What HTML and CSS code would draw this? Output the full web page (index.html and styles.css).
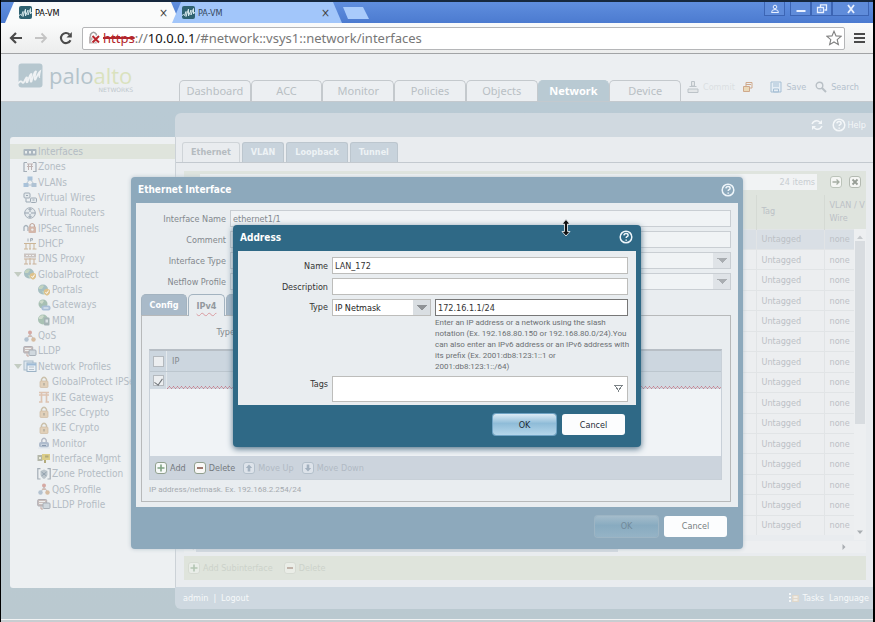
FILE: index.html
```html
<!DOCTYPE html>
<html lang="en">
<head>
<meta charset="utf-8">
<title>PA-VM</title>
<link rel="stylesheet" href="styles.css">
</head>
<body>
<svg class="defs" aria-hidden="true">
  <defs>
    <symbol id="logo" viewBox="0 0 13 13"><rect width="13" height="13" rx="2" fill="#2f6271"/><path d="M0 9.500q2-2 2.500 0L4 5.500v5L6.500 3v7L9 4v5l2.500-6.500V8l1.500-2" fill="none" stroke="#d5e6ea" stroke-width="1"/></symbol>
    <symbol id="help" viewBox="0 0 14 14"><circle cx="7" cy="7" r="5.800" fill="none" stroke="currentColor" stroke-width="1.500"/><path d="M4.900 5.400q.2-1.900 2.200-1.900 2 0 2 1.700 0 1-1 1.500-.9.500-.9 1.400M7.200 9.400v1.400" fill="none" stroke="currentColor" stroke-width="1.500"/></symbol>
    <symbol id="plus" viewBox="0 0 12 12"><rect x=".5" y=".5" width="11" height="11" rx="2.500" fill="#f6f9f8" stroke="currentColor"/><path d="M6 2.500v7M2.500 6h7" stroke="#7fa283" stroke-width="1.600"/></symbol>
    <symbol id="minus" viewBox="0 0 12 12"><rect x=".5" y=".5" width="11" height="11" rx="2.500" fill="#f9f8f6" stroke="currentColor"/><path d="M3 6h6" stroke="#93695f" stroke-width="1.800"/></symbol>
    <symbol id="up" viewBox="0 0 12 12"><rect x=".5" y=".5" width="11" height="11" rx="2.500" fill="#dde3ea" stroke="currentColor"/><path d="M6 2.500 9.200 6H7.300v3.500H4.700V6H2.800z" fill="#a3b1bf"/></symbol>
    <symbol id="down" viewBox="0 0 12 12"><rect x=".5" y=".5" width="11" height="11" rx="2.500" fill="#dde3ea" stroke="currentColor"/><path d="M6 9.500 9.200 6H7.300V2.500H4.700V6H2.800z" fill="#a3b1bf"/></symbol>
    <symbol id="i-if" viewBox="0 0 14 12"><rect x=".5" y="3" width="13" height="6.500" rx="1" fill="#a2afba"/><path d="M2 5h2v2.500H2zM6 5h2v2.500H6zM10 5h2v2.500h-2z" fill="#edf0f0"/></symbol>
    <symbol id="i-zone" viewBox="0 0 14 12"><path d="M1 1.500h3M1 1.500v9h3M13 1.500h-3M13 1.500v9h-3" fill="none" stroke="#98a3ad" stroke-width="1.200"/><path d="M4 3h6M4 5.500h6M5.500 3v6M8.500 3v6" stroke="#b8a9a9"/></symbol>
    <symbol id="i-vlan" viewBox="0 0 14 12"><path d="M7 3 3 8M7 3l4 5M3 9h8" stroke="#aebdc8" fill="none"/><rect x="4.500" y=".5" width="5" height="4" fill="#9ebbd5"/><rect x=".5" y="7" width="5" height="4" fill="#9ebbd5"/><rect x="8.500" y="7" width="5" height="4" fill="#a6bccf"/></symbol>
    <symbol id="i-wire" viewBox="0 0 14 12"><rect x="1" y="1" width="6" height="5" rx="1" fill="#e3e8ec" stroke="#929fab"/><rect x="7.500" y="6" width="6" height="4.500" rx="1" fill="#e3e8ec" stroke="#929fab"/><path d="M3 6.500v3.500h4M3 3.500h2M9.500 8h2" fill="none" stroke="#8f9daa"/></symbol>
    <symbol id="i-router" viewBox="0 0 14 12"><circle cx="7" cy="6" r="5.300" fill="#e3e8ec" stroke="#9aa5b0"/><path d="M7 1.500v3.500M5.500 3 7 1.500 8.500 3M7 10.500V7M5.500 9 7 10.500 8.500 9M1.500 6H6M12.500 6H8" fill="none" stroke="#8795a3"/></symbol>
    <symbol id="i-tunnel" viewBox="0 0 14 12"><path d="M1 9V5q2-3 4 0v4" fill="none" stroke="#9aa7b1" stroke-width="1.300"/><rect x="5.500" y="4.500" width="7.500" height="6.500" rx="1" fill="#d0ae9e"/><path d="M7 5V3q2.200-3 4.400 0v2" fill="none" stroke="#bb9b8e" stroke-width="1.200"/><circle cx="9.300" cy="7.600" r="1.200" fill="#edf0f0"/></symbol>
    <symbol id="i-dhcp" viewBox="0 0 14 12"><path d="M5 .5v3M7.500 3.500v-3h2v1.600h-2" fill="none" stroke="#9aa5b0"/><path d="M7 5v6M1 5.500h12M3 5.500V11M11 5.500V11M1 11h4M6 11h2M9.500 11h4" fill="none" stroke="#c6ab86"/></symbol>
    <symbol id="i-dns" viewBox="0 0 14 12"><rect x="1" y=".5" width="12" height="4" fill="#c6bdb9"/><path d="M7 5v6M1 6h12M3 6v5M11 6v5M1 11h4M6 11h2M9.500 11h4" fill="none" stroke="#c4a78b"/><path d="M3 2.500h2M6 2.500h2M9 2.500h2" stroke="#eee"/></symbol>
    <symbol id="i-globe" viewBox="0 0 14 12"><circle cx="6" cy="5.500" r="5" fill="#9ab7ba"/><path d="M2 3q3-3 5-1L5 5 2 5zM5 7l4 1-2 3z" fill="#bdd0b8"/><path d="M7 6 10 4.500 13 6v3q-1 2-3 2.800Q8 11 7 9z" fill="#dcba7b"/><path d="m8.500 8 1.200 1.500 2-3" fill="none" stroke="#fff"/></symbol>
    <symbol id="i-gate" viewBox="0 0 14 12"><circle cx="6" cy="5" r="4.500" fill="#9ab7a9"/><path d="M2 3q3-3 5-1L5 5z" fill="#c8d7c5"/><rect x="4.500" y="6.500" width="9" height="5" rx="2" fill="#9fb7d3"/><path d="M6.500 9h5" stroke="#edf3f9"/></symbol>
    <symbol id="i-mdm" viewBox="0 0 14 12"><circle cx="6" cy="5.500" r="5" fill="#9ebbaa"/><path d="M2 3q3-3 5-1L5 5 2 5z" fill="#c8d7c5"/><rect x="7" y="3.500" width="5.500" height="8" rx="1" fill="#98a9ab"/><path d="M8.500 5.500h2.500v3H8.500z" fill="#d8e0e2"/></symbol>
    <symbol id="i-qos" viewBox="0 0 14 12"><path d="m7 4-3 5M7 4l3.500 5" stroke="#b5bcc1"/><circle cx="7" cy="2.500" r="2" fill="#d29d96"/><path d="M4.500 7q2.500-4 5 0z" fill="#ccb2a9"/><circle cx="3.500" cy="9.500" r="2.200" fill="#a9bacb"/><circle cx="10.500" cy="9.500" r="2.200" fill="#d3b394"/></symbol>
    <symbol id="i-lldp" viewBox="0 0 14 12"><rect x=".7" y="1.500" width="9" height="6.500" rx="1" fill="#c5b7b4" stroke="#a5a3aa"/><path d="M2 3.500h6M2 5.500h6" stroke="#eee"/><rect x="6" y="5" width="7" height="5.500" rx="1" fill="#ccd4db" stroke="#9ba4ad"/><path d="M4 8.500v2.500h2" fill="none" stroke="#be9b91"/></symbol>
    <symbol id="i-prof" viewBox="0 0 14 12"><rect x="1" y="1" width="9" height="9" fill="#dbe6ef" stroke="#9fb3c4"/><rect x="4" y="3" width="9" height="8.500" fill="#e9f1f7" stroke="#8fa9bf"/><path d="M4 4.500h9" stroke="#8fb0d0" stroke-width="2"/><path d="M6 7h5M6 9.500h5" stroke="#aebbc6"/></symbol>
    <symbol id="i-lock" viewBox="0 0 14 12"><path d="M4.500 5.500V3.300q2.500-4 5 0v2.200" fill="none" stroke="#c6b99f" stroke-width="1.400"/><rect x="3" y="5" width="8" height="6.500" rx="1" fill="#e0cbb0" stroke="#c8b294" stroke-width=".7"/><path d="M7 7v2.500" stroke="#a39c8c" stroke-width="1.300"/></symbol>
    <symbol id="i-ike" viewBox="0 0 14 12"><path d="M2 1.500h10M2 4h10M4.500 1.500V11M9.500 1.500V11M2 11h3.500M8.500 11H12" fill="none" stroke="#dbbca6" stroke-width="1.600"/></symbol>
    <symbol id="i-mon" viewBox="0 0 14 12"><path d="M4.800 5V3q2.200-3.500 4.400 0v2" fill="none" stroke="#a8aebc" stroke-width="1.400"/><rect x="2" y="5" width="10" height="5.500" rx="2" fill="#a5b3c7"/><path d="M4 8h6M1 11h12" stroke="#dce4ed"/><path d="M5 8.500h4" stroke="#7689a2"/></symbol>
    <symbol id="i-mgmt" viewBox="0 0 14 12"><path d="M.5 3h5v6h-5z" fill="#a9ad9d"/><path d="M5 2h8v6H5z" fill="#d9c777"/><path d="M8 3.500h3.500v2H8zM7 8v3h2V8" fill="#a89e68"/><path d="M2 5h2v2H2z" fill="#e9ead9"/></symbol>
    <symbol id="i-zp" viewBox="0 0 14 12"><path d="M3.500.7H.8V11h2.700M10.500.7h2.700V11h-2.700" fill="none" stroke="#97a2ac" stroke-width="1.200"/><path d="M3.500 3 7 1.500 10.500 3v4Q9 10 7 11 5 10 3.500 7z" fill="#b3bdc5"/><path d="m4.500 4 5 4M9.500 4l-5 4" stroke="#8696a4"/></symbol>
  </defs>
</svg>

<div class="window">
  <div class="titlebar">
    <div class="btab btab-on"><svg class="fav"><use href="#logo"/></svg><span>PA-VM</span><button aria-label="Close tab">×</button></div>
    <div class="btab btab-off"><svg class="fav"><use href="#logo"/></svg><span>PA-VM</span><button aria-label="Close tab">×</button></div>
    <button class="newtab" aria-label="New tab"></button>
    <div class="winbtns">
      <button aria-label="User"><svg width="10" height="10" viewBox="0 0 10 10"><circle cx="5" cy="3" r="1.800" fill="none" stroke="#e8f0ff"/><path d="M1.500 8.500q0-3 3.500-3t3.500 3z" fill="none" stroke="#e8f0ff"/></svg></button>
      <button aria-label="Minimise" class="gap"><svg width="12" height="10" viewBox="0 0 12 10"><path d="M1.500 7h9" stroke="#e8f0ff" stroke-width="2"/></svg></button>
      <button aria-label="Restore"><svg width="12" height="10" viewBox="0 0 12 10"><path d="M4.500 3V.8h6V6H8.500M1.500 3.500h6v5h-6z" fill="none" stroke="#e8f0ff" stroke-width="1.300"/><path d="M3.500 5.500h2v1h-2z" fill="#e8f0ff"/></svg></button>
      <button aria-label="Close" class="wide"><svg width="10" height="10" viewBox="0 0 10 10"><path d="m2 1 6 8M8 1 2 9" stroke="#e8f0ff" stroke-width="1.800"/></svg></button>
    </div>
  </div>

  <div class="toolbar">
    <button aria-label="Back"><svg width="14" height="14" viewBox="0 0 14 14"><path d="M13 7H2M7 2 2 7l5 5" fill="none" stroke="#4a4a4a" stroke-width="2.200"/></svg></button>
    <button aria-label="Forward"><svg width="14" height="14" viewBox="0 0 14 14"><path d="M1 7h11M7.500 2.500 12 7l-4.500 4.500" fill="none" stroke="#c4c4c4" stroke-width="1.800"/></svg></button>
    <button aria-label="Reload"><svg width="14" height="14" viewBox="0 0 14 14"><path d="M11.500 9.200A5 5 0 1 1 10.500 3.500" fill="none" stroke="#4a4a4a" stroke-width="2.100"/><path d="M12.800 1v5.500H7.500z" fill="#4a4a4a"/></svg></button>
    <div class="omnibox">
      <svg class="badlock" width="13" height="14" viewBox="0 0 13 14"><path d="M2.500 6V3.500q3-4.500 6 0V5" fill="none" stroke="#a2a2a2" stroke-width="1.500"/><rect x="1" y="5.500" width="8" height="7" fill="#bdb6b6"/><path d="m4 4.500 7 7M11 4.500l-7 7" stroke="#fff" stroke-width="3.500"/><path d="m4.500 5 6.500 6.500M11 5l-6.500 6.500" stroke="#b9262c" stroke-width="2"/></svg>
      <div class="url" role="textbox" aria-label="Address" contenteditable="true" spellcheck="false"><span class="bad">https</span>://<span class="host">10.0.0.1</span>/#network::vsys1::network/interfaces</div>
      <button aria-label="Bookmark"><svg width="16" height="16" viewBox="0 0 16 16"><path d="m8 1.200 2 4.700 5 .4-3.800 3.300 1.200 5L8 12l-4.400 2.600 1.200-5L1 6.300l5-.4z" fill="#fff" stroke="#808080" stroke-width="1.100"/></svg></button>
    </div>
    <button aria-label="Menu"><svg width="12" height="12" viewBox="0 0 12 12"><path d="M0 2h11M0 6h11M0 10h11" stroke="#4a4a4a" stroke-width="2.200"/></svg></button>
  </div>

  <header class="header">
    <div class="brand">
      <svg width="26" height="26" viewBox="0 0 26 26"><rect x=".5" y=".5" width="24" height="24" rx="3" fill="#b6c7cf"/><path d="M0 20.500q3-3.500 4-1.500t2 0q2-5 3-4.500-1.500 6 .5 4.500 3-9 4-8-2 9 0 7.500 3-11 4.500-10-2.500 9.500-.5 8 3-7 4.500-8-1.500 6 0 5.500" fill="none" stroke="#eff2f4" stroke-width="1.700"/></svg>
      <div class="brandtext"><span class="name">palo<b>alto</b></span><small>NETWORKS</small></div>
    </div>
    <nav class="maintabs">
      <a href="#">Dashboard</a><a href="#">ACC</a><a href="#">Monitor</a><a href="#">Policies</a><a href="#">Objects</a><a href="#" class="on">Network</a><a href="#">Device</a>
    </nav>
    <div class="actions">
      <a href="#" class="faint"><svg width="12" height="12" viewBox="0 0 12 12"><path d="M4.500.5h3V5h-3zM2.500 5.500h7M1 8h10v3.500H1z" fill="#e3e6e8" stroke="#bcc3c8"/></svg>Commit</a>
      <a href="#" aria-label="Locks" class="locks"><svg width="12" height="12" viewBox="0 0 12 12"><path d="M1.500 5.500h6v5h-6z" fill="#ead9b9" stroke="#cfa98c"/><path d="M4 5V1.500h6V7H8M4 3.500h5" fill="none" stroke="#cfa98c"/></svg></a>
      <a href="#"><svg width="12" height="12" viewBox="0 0 12 12"><path d="M1 1h10v10H1z" fill="#e6eef5" stroke="#a6bfd4"/><path d="M3 3h6M3 5h6M3.500 8h5v3h-5z" fill="none" stroke="#a6bfd4"/></svg>Save</a>
      <a href="#"><svg width="12" height="12" viewBox="0 0 12 12"><circle cx="4.500" cy="4.500" r="3.300" fill="none" stroke="#b9c0c6" stroke-width="1.400"/><path d="m7 7 4 4" stroke="#b9c0c6" stroke-width="2"/></svg>Search</a>
    </div>
  </header>

  <main class="main">
    <nav class="sidebar">
      <ul>
        <li class="on"><svg><use href="#i-if"/></svg>Interfaces</li>
        <li><svg><use href="#i-zone"/></svg>Zones</li>
        <li><svg><use href="#i-vlan"/></svg>VLANs</li>
        <li><svg><use href="#i-wire"/></svg>Virtual Wires</li>
        <li><svg><use href="#i-router"/></svg>Virtual Routers</li>
        <li><svg><use href="#i-tunnel"/></svg>IPSec Tunnels</li>
        <li><svg><use href="#i-dhcp"/></svg>DHCP</li>
        <li><svg><use href="#i-dns"/></svg>DNS Proxy</li>
        <li class="open"><svg><use href="#i-globe"/></svg>GlobalProtect</li>
        <li class="sub"><svg><use href="#i-globe"/></svg>Portals</li>
        <li class="sub"><svg><use href="#i-gate"/></svg>Gateways</li>
        <li class="sub"><svg><use href="#i-mdm"/></svg>MDM</li>
        <li><svg><use href="#i-qos"/></svg>QoS</li>
        <li><svg><use href="#i-lldp"/></svg>LLDP</li>
        <li class="open"><svg><use href="#i-prof"/></svg>Network Profiles</li>
        <li class="sub"><svg><use href="#i-lock"/></svg>GlobalProtect IPSec</li>
        <li class="sub"><svg><use href="#i-ike"/></svg>IKE Gateways</li>
        <li class="sub"><svg><use href="#i-lock"/></svg>IPSec Crypto</li>
        <li class="sub"><svg><use href="#i-lock"/></svg>IKE Crypto</li>
        <li class="sub"><svg><use href="#i-mon"/></svg>Monitor</li>
        <li class="sub"><svg><use href="#i-mgmt"/></svg>Interface Mgmt</li>
        <li class="sub"><svg><use href="#i-zp"/></svg>Zone Protection</li>
        <li class="sub"><svg><use href="#i-qos"/></svg>QoS Profile</li>
        <li class="sub"><svg><use href="#i-lldp"/></svg>LLDP Profile</li>
      </ul>
    </nav>

    <section class="panel">
      <div class="panelhead">
        <svg width="12" height="12" viewBox="0 0 12 12"><path d="M1 5q2-4 6-3l3 2M11 7q-2 4-6 3L2 8" fill="none" stroke="#f4f7f9" stroke-width="1.500"/><path d="M11 1v4H7zM1 11V7h4z" fill="#f4f7f9"/></svg>
        <a href="#"><svg width="14" height="14"><use href="#help"/></svg>Help</a>
      </div>
      <div class="panelbody">
        <div class="subtabs"><a href="#" class="on">Ethernet</a><a href="#">VLAN</a><a href="#">Loopback</a><a href="#">Tunnel</a></div>
        <div class="grid">
          <div class="gridtop">
            <div class="search">24 items</div>
            <svg width="12" height="12" viewBox="0 0 12 12"><rect x=".5" y=".5" width="11" height="11" rx="2.500" fill="#f5f6f4" stroke="#bcc4ba"/><path d="M2.500 6H9M6.500 3.500 9 6 6.500 8.500" fill="none" stroke="#a5ada3" stroke-width="1.300"/></svg>
            <svg width="12" height="12" viewBox="0 0 12 12"><rect x=".5" y=".5" width="11" height="11" rx="2.500" fill="#f5f6f4" stroke="#b4bab2"/><path d="m3.500 3.500 5 5M8.500 3.500l-5 5" stroke="#979d96" stroke-width="1.800"/></svg>
          </div>
          <div class="tablewrap">
            <table>
              <colgroup><col><col class="ctag"><col class="cvlan"></colgroup>
              <thead><tr><th></th><th>Tag</th><th>VLAN / V<br>Wire</th></tr></thead>
              <tbody>
                <tr class="sel"><td></td><td>Untagged</td><td>none</td></tr>
                <tr><td></td><td>Untagged</td><td>none</td></tr>
                <tr><td></td><td>Untagged</td><td>none</td></tr>
                <tr><td></td><td>Untagged</td><td>none</td></tr>
                <tr><td></td><td>Untagged</td><td>none</td></tr>
                <tr><td></td><td>Untagged</td><td>none</td></tr>
                <tr><td></td><td>Untagged</td><td>none</td></tr>
                <tr><td></td><td>Untagged</td><td>none</td></tr>
                <tr><td></td><td>Untagged</td><td>none</td></tr>
                <tr><td></td><td>Untagged</td><td>none</td></tr>
                <tr><td></td><td>Untagged</td><td>none</td></tr>
                <tr><td></td><td>Untagged</td><td>none</td></tr>
                <tr><td></td><td>Untagged</td><td>none</td></tr>
                <tr><td></td><td>Untagged</td><td>none</td></tr>
                <tr><td></td><td>Untagged</td><td>none</td></tr>
              </tbody>
            </table>
            <div class="vscroll"><svg width="8" height="8" viewBox="0 0 8 8"><path d="M1 6 4 2.500 7 6z" fill="#c5c9cc"/></svg><i></i><svg width="8" height="8" viewBox="0 0 8 8"><path d="m1 2.500 3 3.500 3-3.500z" fill="#a9aeb2"/></svg></div>
          </div>
          <div class="hscroll"><svg width="8" height="8" viewBox="0 0 8 8"><path d="M5.500 1 2.500 4l3 3z" fill="#b5b9bd"/></svg><i></i><svg width="8" height="8" viewBox="0 0 8 8"><path d="m2.500 1 3 3-3 3z" fill="#a9aeb2"/></svg></div>
          <div class="gridfoot"><svg width="12" height="12"><use href="#plus"/></svg><span>Add Subinterface</span><svg width="12" height="12"><use href="#minus"/></svg><span>Delete</span></div>
        </div>
      </div>
      <footer class="panelfoot">
        <b>admin</b><span>|</span><a href="#">Logout</a>
        <span class="right"><svg width="12" height="12" viewBox="0 0 12 12"><path d="M1 2h2M1 5.500h2M1 9h2" stroke="#fff" stroke-width="1.500"/><path d="M4 3h7v7H4z" fill="#e0d8cb"/><path d="M5.500 5h4M5.500 8h4" stroke="#fff"/></svg>Tasks</span><span>Language</span>
      </footer>
    </section>
  </main>
  <div class="bottomline"></div>

  <div class="overlay over1">
    <section class="dialog d1" role="dialog" aria-label="Ethernet Interface">
      <div class="dhead"><h2>Ethernet Interface</h2><svg width="14" height="14"><use href="#help"/></svg></div>
      <div class="dbody">
        <div class="row"><label for="ifn">Interface Name</label><input id="ifn" value="ethernet1/1"></div>
        <div class="row"><label for="cmt">Comment</label><input id="cmt"></div>
        <div class="row"><label for="ift">Interface Type</label><select id="ift"><option></option></select></div>
        <div class="row"><label for="nfp">Netflow Profile</label><select id="nfp"><option></option></select></div>
        <div class="dtabs"><button>Config</button><button class="on"><span>IPv4</span></button><button class="rest" aria-label="IPv6"></button></div>
        <div class="dpanel">
          <div class="typelabel">Type</div>
          <div class="iptable">
            <div class="iphead"><label><input type="checkbox" aria-label="Select all"></label><span>IP</span></div>
            <div class="iprow"><label><input type="checkbox" checked aria-label="Select row"></label><span></span></div>
            <div class="ipempty"></div>
            <div class="iptools"><button><svg width="12" height="12"><use href="#plus"/></svg>Add</button><button><svg width="12" height="12"><use href="#minus"/></svg>Delete</button><button class="dim"><svg width="12" height="12"><use href="#up"/></svg>Move Up</button><button class="dim"><svg width="12" height="12"><use href="#down"/></svg>Move Down</button></div>
          </div>
          <p class="hint">IP address/netmask. Ex. 192.168.2.254/24</p>
        </div>
      </div>
      <div class="dfoot"><button class="ok">OK</button><button class="cancel">Cancel</button></div>
    </section>
  </div>

  <div class="overlay over2">
    <section class="dialog d2" role="dialog" aria-label="Address">
      <div class="dhead"><h2>Address</h2><svg width="14" height="14"><use href="#help"/></svg></div>
      <div class="dbody">
        <div class="row"><label for="nm">Name</label><input id="nm" value="LAN_172"></div>
        <div class="row"><label for="ds">Description</label><input id="ds"></div>
        <div class="row top"><label for="tp">Type</label>
          <select id="tp"><option>IP Netmask</option></select>
          <div class="addr"><input value="172.16.1.1/24" aria-label="IP address"><p>Enter an IP address or a network using the slash<br>notation (Ex. 192.168.80.150 or 192.168.80.0/24).You<br>can also enter an IPv6 address or an IPv6 address with<br>its prefix (Ex. 2001:db8:123:1::1 or<br>2001:db8:123:1::/64)</p></div>
        </div>
        <div class="row tags"><label for="tg">Tags</label><select id="tg"><option></option></select></div>
      </div>
      <div class="dfoot"><button class="ok">OK</button><button class="cancel">Cancel</button></div>
    </section>
    <svg class="cursor" width="12" height="18" viewBox="0 0 12 18"><path d="M6 .5 10 5H7.500v7.500H10L6 17 2 12.500h2.500V5H2z" fill="#111" stroke="#dfe6ea" stroke-width=".9"/></svg>
  </div>
</div>
</body>
</html>
```
FILE: styles.css
```css
* { box-sizing: border-box; }
html, body { margin: 0; }
body, button, input, select {
  font-family: "DejaVu Sans Condensed", "Noto Sans", sans-serif;
  font-size: 9px;
}
button { border: 0; padding: 0; background: none; color: inherit; }
a { color: inherit; text-decoration: none; }
svg { flex: none; display: block; }
.defs { position: absolute; width: 0; height: 0; }

.window {
  position: relative;
  display: flex;
  flex-direction: column;
  min-height: 100vh;
  overflow: hidden;
  border-left: 1px solid #000;
  border-right: 2px solid #000;
}

/* browser frame */
.titlebar {
  display: flex;
  height: 23px;
  padding-left: 4px;
  border-top: 2px solid #16283e;
  background: linear-gradient(#5f8ede, #4c7bd0);
}
.btab {
  display: flex;
  align-items: center;
  gap: 3px;
  width: 175px;
  padding: 0 12px 0 14px;
  clip-path: polygon(0 100%, 9px 0, calc(100% - 9px) 0, 100% 100%);
  font-size: 9px;
}
.btab span { flex: 1; }
.btab button { font-size: 12px; line-height: 14px; color: #444; }
.btab-on { background: #fafbfb; }
.btab-off { width: 170px; margin-left: -8px; padding-left: 10px; background: #a2c6fa; color: #33465c; }
.fav { width: 13px; height: 13px; }
.newtab {
  width: 26px;
  height: 12px;
  margin: 5px 0 0 1px;
  background: #a9cbfb;
  clip-path: polygon(0 0, 20px 0, 100% 100%, 5px 100%);
}
.winbtns { display: flex; margin-left: auto; padding-right: 4px; height: 14px; }
.winbtns button {
  display: grid;
  place-items: center;
  width: 21px;
  border: 1px solid #3c65b4;
  border-top: 0;
  background: #5f8cda;
}
.winbtns .gap { margin-left: 5px; }
.winbtns .wide { width: 37px; }
.toolbar {
  display: flex;
  align-items: center;
  gap: 11px;
  height: 31px;
  padding: 0 7px 0 8px;
  border-bottom: 1px solid #a2a4a6;
  background: linear-gradient(#fafbfb, #eceded);
}
.omnibox {
  display: flex;
  align-items: center;
  flex: 1;
  height: 23px;
  margin: 0 -2px;
  padding: 0 2px 0 5px;
  border: 1px solid #b5b6b8;
  border-radius: 2px;
  background: #fff;
}
.url { flex: 1; padding-left: 2px; font: 13px/20px "Noto Sans", sans-serif; color: #777; white-space: nowrap; }
.url .bad { color: #b3262c; text-decoration: line-through 2px; }
.url .host { color: #111; }

/* application header */
.header {
  display: flex;
  align-items: flex-end;
  height: 48px;
  border-bottom: 1px solid #c3c9ce;
  background: #eceff2;
}
.brand { display: flex; width: 178px; height: 38px; padding-left: 17px; gap: 5px; }
.brandtext { display: flex; flex-direction: column; width: 84px; }
.brandtext .name { font: 22px/24px "Open Sans", sans-serif; color: #b4c3cb; }
.brandtext b { font-weight: 400; color: #dae2be; }
.brandtext small { font: 6px/6px "DejaVu Sans", sans-serif; text-align: right; color: #bfc8cd; }
.maintabs { display: flex; width: 502px; }
.maintabs a {
  flex: 1;
  height: 21px;
  border: 1px solid #c4c9cd;
  border-bottom: 0;
  border-radius: 5px 5px 0 0;
  font: 11px/20px "Noto Sans", sans-serif;
  text-align: center;
  color: #b9bfc4;
}
.maintabs .on { margin-bottom: -1px; border-color: #b9cad3; background: #b9cad3; color: #fff; font-weight: 700; }
.actions {
  display: flex;
  flex: 1;
  justify-content: space-between;
  padding: 0 14px 8px 6px;
  color: #b4c1cd;
}
.actions a { display: flex; align-items: center; gap: 4px; }
.actions .faint { color: #dbdfe2; }
.actions .locks { margin: 0 8px 0 -2px; }

/* page body */
.main {
  display: flex;
  flex: 1;
  padding: 11px 0 10px 9px;
  background: linear-gradient(#b9cad4, #bac9d0);
}
.sidebar {
  width: 165px;
  margin: 24px 0 21px;
  padding-top: 7px;
  border-radius: 3px 0 0 3px;
  background: #edf0f2;
}
.sidebar ul {
  display: flex;
  flex-direction: column;
  justify-content: space-between;
  height: 368px;
  margin: 0;
  padding: 0;
  list-style: none;
}
.sidebar li {
  position: relative;
  display: flex;
  align-items: center;
  gap: 1px;
  height: 15px;
  padding-left: 13px;
  font-size: 10px;
  color: #b4bcc4;
  white-space: nowrap;
}
.sidebar li svg { width: 14px; height: 12px; opacity: .85; }
.sidebar .on { background: #dfe4dc; }
.sidebar .sub { padding-left: 27px; }
.sidebar .open::before {
  content: "";
  position: absolute;
  left: 4px;
  top: 5px;
  border: 4px solid transparent;
  border-top: 5px solid #c3ccc2;
  border-bottom: 0;
}
.panel { display: flex; flex: 1; flex-direction: column; min-width: 0; }
.panelhead {
  display: flex;
  align-items: center;
  justify-content: flex-end;
  gap: 9px;
  height: 24px;
  padding-right: 7px;
  border-radius: 6px 0 0 0;
  background: #d0d9e0;
  color: #f4f7f9;
}
.panelhead a { display: flex; align-items: center; gap: 2px; }
.panelbody {
  flex: 1;
  padding: 5px 7px 7px 8px;
  border-left: 1px solid #ccd2d7;
  background: #e9ecef;
}
.subtabs { display: flex; gap: 2px; margin: 0 -7px 8px -8px; padding-left: 6px; border-bottom: 1px solid #c3c9cf; }
.subtabs a {
  height: 20px;
  padding: 0 8px;
  border: 1px solid #bcc6ce;
  border-bottom: 0;
  border-radius: 3px 3px 0 0;
  background: #c8d3dc;
  font-size: 9px;
  font-weight: 700;
  line-height: 19px;
  color: #edf2f5;
}
.subtabs .on { margin-bottom: -1px; border-color: #cfd4d8; background: #e9ecef; color: #b5bbc0; }
.gridtop {
  display: flex;
  align-items: center;
  gap: 7px;
  height: 24px;
  padding: 0 5px 3px 16px;
  background: #dfe4de;
}
.search {
  flex: 1;
  height: 16px;
  margin-right: 6px;
  padding-right: 2px;
  background: #f1f3f4;
  line-height: 16px;
  text-align: right;
  color: #c8cdd1;
}
.tablewrap { position: relative; height: 340px; }
table { width: 100%; height: 340px; border-collapse: collapse; table-layout: fixed; color: #bcc1c6; }
.ctag { width: 68px; }
.cvlan { width: 42px; }
th {
  height: 34px;
  padding: 0 0 0 5px;
  border-left: 1px solid #d5dad4;
  background: #dfe4de;
  font-weight: 400;
  line-height: 13px;
  text-align: left;
  white-space: nowrap;
  overflow: hidden;
}
td { padding: 0 0 0 5px; border-left: 1px solid #e1e4e6; border-top: 1px solid #e1e4e6; }
tbody tr { background: #eceef0; }
tbody .sel { background: #d9dfe5; }
.vscroll {
  position: absolute;
  top: 34px;
  right: 0;
  bottom: -5px;
  display: flex;
  flex-direction: column;
  align-items: center;
  justify-content: space-between;
  width: 12px;
  padding: 4px 0;
  background: #edeff1;
}
.vscroll i { width: 10px; height: 183px; margin-bottom: auto; background: #d8dce0; }
.hscroll { display: flex; align-items: center; height: 12px; margin: 6px 0 3px; padding: 0 18px 0 4px; background: #edeff1; }
.hscroll i { width: 422px; height: 10px; margin-right: auto; background: #d4dae0; }
.gridfoot {
  display: flex;
  align-items: center;
  gap: 3px;
  height: 24px;
  padding-left: 4px;
  background: #dfe4dc;
  color: #ccd2ca;
}
.gridfoot svg { opacity: .45; }
.gridfoot span { margin-right: 8px; font-size: 9px; }
.panelfoot {
  display: flex;
  align-items: center;
  gap: 5px;
  height: 22px;
  padding: 0 4px 0 8px;
  border-radius: 0 0 0 6px;
  background: #ced8e0;
  color: #f6f8fa;
}
.panelfoot b { font-weight: 400; }
.panelfoot .right { display: flex; align-items: center; gap: 2px; margin-left: auto; }
.bottomline { height: 3px; border-top: 1px solid #f2f3f4; background: #c8cdd1; }

/* dialogs */
.overlay { position: absolute; inset: 0; display: flex; justify-content: center; align-items: flex-start; }
.over1 { padding-top: 177px; }
.over2 { padding-top: 225px; }
.dialog { padding: 0 5px; border-radius: 4px; }
.d1 { width: 612px; background: #8da9bc; box-shadow: 0 0 4px #b9c6cf; }
.d2 { width: 408px; background: #2f6986; box-shadow: 0 2px 6px #54748a; }
.dhead { display: flex; align-items: center; justify-content: space-between; height: 26px; padding: 0 3px 2px 2px; color: #fff; }
.dhead svg { color: #eef5fa; }
.d1 .dhead { padding-bottom: 1px; }
.dhead h2 { margin: 0; font-size: 10px; font-weight: 700; }
.dbody { background: #e9edf0; }
.row { display: flex; align-items: center; gap: 4px; height: 17px; margin-bottom: 4px; }
.row label { flex: none; width: 86px; text-align: right; }
.row input, .row select {
  flex: 1;
  width: 0;
  height: 17px;
  margin: 0;
  padding: 0 2px;
  border: 1px solid #c8ccd0;
  border-radius: 0;
  background: #fff;
  color: inherit;
  outline: 0;
}
.row select { appearance: none; }
.d1 .dbody { padding: 7px 7px 5px 5px; color: #83888d; }
.d1 .row label { width: 85px; }
.d1 .row input, .d1 .row select { background-color: #f0f3f5; border-color: #c9ced3; }
.d1 .row select, .d2 #tp {
  background-image:
    conic-gradient(from 315deg at 50% 100%, #8e9296 90deg, transparent 0),
    linear-gradient(#d9dee2, #d9dee2);
  background-repeat: no-repeat;
  background-size: 10px 5px, 17px 100%;
  background-position: right 3px center, right center;
}
.d1 .row select {
  background-image:
    conic-gradient(from 315deg at 50% 100%, #a9adb1 90deg, transparent 0),
    linear-gradient(#dfe3e7, #dfe3e7);
}
.dtabs { display: flex; gap: 1px; height: 21px; margin-top: 3px; }
.dtabs button {
  width: 46px;
  border: 1px solid #a3b3c0;
  border-bottom: 0;
  border-radius: 5px 5px 0 0;
  background: #a9bac9;
  color: #fff;
  font-weight: 700;
  font-size: 9px;
}
.dtabs .on { width: 37px; margin-bottom: -1px; background: #e9edf0; color: #93999e; }
.dtabs .on span { text-decoration: underline wavy #d99a9f 1px; text-underline-offset: 3px; }
.dpanel { height: 187px; padding: 0 8px 0 7px; border: 1px solid #b7b9ba; }
.typelabel { width: 86px; height: 33px; line-height: 32px; text-align: right; }
.iptable { border: 1px solid #c8d0d8; border-top: 2px solid #b7bec5; background: #f0f3f6; }
.iphead, .iprow { display: flex; align-items: center; background: #ccd6df; }
.iphead { height: 21px; border-bottom: 1px solid #bcc6ce; }
.iprow { height: 17px; background: #d0d9e1; }
.iphead label, .iprow label { display: grid; place-items: center; width: 17px; height: 100%; border-right: 1px solid #e3e8ec; }
.iphead span { padding-left: 5px; }
.iprow span {
  flex: 1;
  height: 100%;
  background:
    repeating-linear-gradient(90deg, #c47f8f 0 1px, transparent 1px 4px) 0 100% / 100% 1px no-repeat,
    repeating-linear-gradient(90deg, transparent 0 1px, #cf9aa6 1px 2px, transparent 2px 3px, #cf9aa6 3px 4px) 0 calc(100% - 1px) / 100% 1px no-repeat,
    repeating-linear-gradient(90deg, transparent 0 2px, #c47f8f 2px 3px, transparent 3px 4px) 0 calc(100% - 2px) / 100% 1px no-repeat;
}
.iptable input {
  display: grid;
  place-items: center;
  appearance: none;
  width: 11px;
  height: 11px;
  margin: 0;
  border: 1px solid #b4b9be;
  background: #eceef0;
}
.iptable input:checked::before {
  content: "";
  width: 4px;
  height: 7px;
  border: solid #6d7277;
  border-width: 0 1px 1px 0;
  rotate: 35deg;
}
.ipempty { height: 67px; }
.iptools { display: flex; align-items: center; gap: 8px; height: 23px; padding-left: 5px; background: #ccd4dd; color: #74797e; }
.iptools button { display: flex; align-items: center; gap: 3px; font-size: 9px; }
.iptools svg { color: #91a08f; }
.iptools .dim { color: #b1bac4; }
.iptools .dim svg { color: #b4c0cb; }
.hint { margin: 5px 0 0; font: 8px/9px Roboto, sans-serif; color: #a5aaaf; }
.dfoot { display: flex; align-items: center; justify-content: flex-end; gap: 6px; height: 42px; }
.dfoot button { width: 63px; height: 21px; border-radius: 3px; font-size: 9px; }
.cancel { background: #fcfdfe; }
.ok { background: linear-gradient(#dcebf5, #8fbcd8 45%, #b5d6ea); box-shadow: 0 0 0 1px #6fa3c4; }
.d1 .dfoot { padding: 0 11px 4px 0; color: #777d82; }
.d1 .ok { background: linear-gradient(#a4bccb, #88abc0 45%, #95b3c6); box-shadow: 0 0 0 1px #9db5c4; color: #71899a; }
.d2 .dbody { padding: 6px 8px 3px 4px; color: #333; }
.d2 .row input, .d2 .row select { border-color: #bdbdbb; }
.d2 .top { align-items: flex-start; height: auto; margin-bottom: 4px; }
.d2 .top label { line-height: 17px; }
.d2 #tp { flex: none; width: 99px; color: #222; }
.addr { display: flex; flex: 1; flex-direction: column; min-width: 0; }
.d2 .addr input { flex: none; width: 100%; border-color: #777; }
.addr p { margin: 1px 0 0; font: 8px/11px Roboto, sans-serif; color: #6c7073; white-space: nowrap; }
.d2 .tags { align-items: flex-start; height: 26px; margin: 0; }
.d2 .tags label { line-height: 17px; }
.d2 .tags select {
  height: 26px;
  background:
    conic-gradient(from 330deg at 50% 100%, #fff 60deg, transparent 0) no-repeat right 6px top 9px / 5px 4px,
    conic-gradient(from 328deg at 50% 100%, #7c8387 64deg, transparent 0) no-repeat right 4px top 8px / 9px 7px,
    #fff;
}
.d2 .dfoot { padding: 0 11px 3px 0; color: #1f2c36; }
.cursor { position: absolute; left: 559px; top: 219px; }
```
